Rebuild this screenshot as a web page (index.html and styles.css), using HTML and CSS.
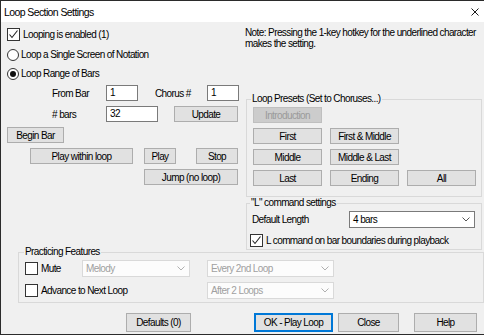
FILE: index.html
```html
<!DOCTYPE html>
<html lang="en">
<head>
  <meta charset="UTF-8">
  <title>Loop Section Settings</title>
  <link rel="stylesheet" href="styles.css">
</head>
<body>
  <div class="dialog">
    <div class="titlebar">
      <span class="title">Loop Section Settings</span>
      <svg class="close" width="8" height="8" viewBox="0 0 8 8"><path d="M0.5 0.5L7.5 7.5M7.5 0.5L0.5 7.5" stroke="#1a1a1a" stroke-width="1"/></svg>
    </div>

    <div class="content">
      <div class="top">
        <div class="left">
          <div class="check-row">
            <span class="box"><svg width="11" height="11" viewBox="0 0 11 11"><path d="M1.5 5.5L4 8.5L9.5 1.5" fill="none" stroke="#222" stroke-width="1.1"/></svg></span>
            Looping is enabled (1)
          </div>
          <div class="radio-row first-radio"><span class="radio"></span>Loop a Single Screen of Notation</div>
          <div class="radio-row"><span class="radio on"></span>Loop Range of Bars</div>

          <div class="bar-row">
            <span class="lbl">From Bar</span>
            <span class="field w-sm">1</span>
            <span class="lbl lbl-chorus">Chorus #</span>
            <span class="field w-sm">1</span>
          </div>
          <div class="bar-row">
            <span class="lbl"># bars</span>
            <span class="field w-md">32</span>
            <button class="btn btn-update">Update</button>
          </div>

          <button class="btn btn-begin">Begin Bar</button>

          <div class="play-row">
            <button class="btn btn-within">Play within loop</button>
            <button class="btn btn-play">Play</button>
            <button class="btn btn-stop">Stop</button>
          </div>
          <div class="play-row jump-row">
            <button class="btn btn-jump">Jump (no loop)</button>
          </div>
        </div>

        <div class="right">
          <p class="note">Note: Pressing the 1-key hotkey for the underlined character<br>makes the setting.</p>

          <fieldset class="group presets">
            <legend>Loop Presets (Set to Choruses...)</legend>
            <div class="preset-grid">
              <button class="btn" disabled>Introduction</button>
              <button class="btn new-row">First</button>
              <button class="btn">First &amp; Middle</button>
              <button class="btn new-row">Middle</button>
              <button class="btn">Middle &amp; Last</button>
              <button class="btn new-row">Last</button>
              <button class="btn">Ending</button>
              <button class="btn">All</button>
            </div>
          </fieldset>

          <fieldset class="group lcmd">
            <legend>"L" command settings</legend>
            <div class="len-row">
              <span class="len-lbl">Default Length</span>
              <div class="combo len-combo">
                <span>4 bars</span>
                <svg width="8" height="5" viewBox="0 0 8 5"><path d="M0.5 0.5L4 4L7.5 0.5" fill="none" stroke="#555" stroke-width="1"/></svg>
              </div>
            </div>
            <div class="check-row lcheck">
              <span class="box"><svg width="11" height="11" viewBox="0 0 11 11"><path d="M1.5 5.5L4 8.5L9.5 1.5" fill="none" stroke="#222" stroke-width="1.1"/></svg></span>
              L command on bar boundaries during playback
            </div>
          </fieldset>
        </div>
      </div>

      <fieldset class="group practice">
        <legend>Practicing Features</legend>
        <div class="practice-grid">
          <div class="check-row"><span class="box"></span>Mute</div>
          <div class="combo off combo-melody">
            <span>Melody</span>
            <svg width="8" height="5" viewBox="0 0 8 5"><path d="M0.5 0.5L4 4L7.5 0.5" fill="none" stroke="#b0b0b0" stroke-width="1"/></svg>
          </div>
          <div class="combo off">
            <span>Every 2nd Loop</span>
            <svg width="8" height="5" viewBox="0 0 8 5"><path d="M0.5 0.5L4 4L7.5 0.5" fill="none" stroke="#b0b0b0" stroke-width="1"/></svg>
          </div>
          <div class="check-row span-two"><span class="box"></span>Advance to Next Loop</div>
          <div class="combo off">
            <span>After 2 Loops</span>
            <svg width="8" height="5" viewBox="0 0 8 5"><path d="M0.5 0.5L4 4L7.5 0.5" fill="none" stroke="#b0b0b0" stroke-width="1"/></svg>
          </div>
        </div>
      </fieldset>

      <div class="footer">
        <button class="btn btn-defaults">Defaults (0)</button>
        <button class="btn btn-ok">OK - Play Loop</button>
        <button class="btn btn-close">Close</button>
        <button class="btn btn-help">Help</button>
      </div>
    </div>
  </div>
</body>
</html>
```

FILE: styles.css
```css
* {
  box-sizing: border-box;
}

body {
  margin: 0;
  background: #fff;
  font-family: 'Liberation Sans', Arial, sans-serif;
  font-size: 10px;
  letter-spacing: -0.6px;
  color: #000;
}

.dialog {
  width: 484px;
  height: 335px;
  border: 1px solid #2b2b2b;
  border-right: none;
  background: #f0f0f0;
  display: flex;
  flex-direction: column;
}

.titlebar {
  height: 21px;
  flex-shrink: 0;
  background: #fff;
  display: flex;
  align-items: center;
  justify-content: space-between;
  padding: 0 5px 0 3px;
}

.title {
  font-size: 10.5px;
}

.content {
  flex: 1;
  display: flex;
  flex-direction: column;
}

.top {
  display: flex;
  height: 229px;
}

/* left column */
.left {
  width: 244px;
  padding: 6px 0 0 6px;
}

.check-row, .radio-row {
  display: flex;
  align-items: center;
  height: 13px;
  white-space: nowrap;
}

.box {
  width: 13px;
  height: 13px;
  flex-shrink: 0;
  border: 1px solid #333;
  background: #fff;
  margin-right: 3px;
  display: flex;
  align-items: center;
  justify-content: center;
}

.radio {
  width: 12px;
  height: 12px;
  flex-shrink: 0;
  border: 1px solid #333;
  border-radius: 50%;
  background: #fff;
  margin-right: 2px;
  display: flex;
  align-items: center;
  justify-content: center;
}

.radio.on::after {
  content: '';
  width: 6px;
  height: 6px;
  border-radius: 50%;
  background: #111;
}

.first-radio {
  margin-top: 7px;
}

.radio-row + .radio-row {
  margin-top: 6px;
}

.bar-row {
  display: flex;
  align-items: center;
  height: 16px;
  margin-top: 5px;
  padding-left: 45px;
}

.lbl {
  width: 54px;
}

.lbl-chorus {
  width: 69px;
  padding-left: 17px;
}

.field {
  height: 16px;
  border: 1px solid #7a7a7a;
  background: #fff;
  padding: 0 3px;
  line-height: 14px;
}

.w-sm {
  width: 32px;
}

.w-md {
  width: 52px;
}

.btn {
  height: 16px;
  padding: 0;
  border: 1px solid #adadad;
  background: #e1e1e1;
  font-family: inherit;
  font-size: 10px;
  letter-spacing: -0.6px;
  color: #000;
  white-space: nowrap;
}

.btn:disabled {
  background: #cccccc;
  border-color: #bfbfbf;
  color: #9a9a9a;
}

.btn-update {
  width: 64px;
  margin-left: 16px;
}

.btn-begin {
  display: block;
  width: 57px;
  margin-top: 5px;
}

.play-row {
  display: flex;
  margin-top: 5px;
  padding-left: 23px;
}

.btn-within {
  width: 103px;
}

.btn-play {
  width: 32px;
  margin-left: 11px;
}

.btn-stop {
  width: 42px;
  margin-left: 20px;
}

.jump-row {
  padding-left: 137px;
}

.btn-jump {
  width: 94px;
}

/* right column */
.right {
  flex: 1;
}

.note {
  height: 71px;
  margin: 0;
  padding-top: 5px;
  line-height: 11px;
  white-space: nowrap;
}

.group {
  margin: 0 2px 0 1px;
  min-width: 0;
  border: 1px solid #d9d9d9;
}

.group legend {
  padding: 0 1px;
  margin-left: -2px;
  line-height: 12px;
}

.presets {
  padding: 2px 0 10px 6px;
}

.preset-grid {
  display: grid;
  grid-template-columns: 69px 69px 69px;
  grid-auto-rows: 16px;
  column-gap: 8px;
  row-gap: 5px;
}

.new-row {
  grid-column: 1;
}

.lcmd {
  padding: 2px 0 2px 5px;
}

.len-row {
  display: flex;
  align-items: center;
  height: 17px;
}

.len-lbl {
  width: 97px;
}

.combo {
  height: 17px;
  display: flex;
  align-items: center;
  justify-content: space-between;
  border: 1px solid #7a7a7a;
  background: #fff;
  padding: 0 4px 0 3px;
}

.combo.off {
  border-color: #d9d9d9;
  background: #fcfcfc;
  color: #a0a0a0;
}

.len-combo {
  width: 126px;
}

.lcheck {
  margin-top: 6px;
  margin-left: -2px;
}

.practice {
  margin: -4px 0 0 17px;
  padding: 3px 0 3px 6px;
}

.practice legend {
  line-height: 10px;
  margin-left: -1px;
}

.practice-grid {
  display: grid;
  grid-template-columns: 57px 125px 127px;
  grid-auto-rows: 17px;
  row-gap: 5px;
  align-items: center;
}

.combo-melody {
  width: 108px;
}

.span-two {
  grid-column: span 2;
}

/* bottom buttons */
.footer {
  display: flex;
  margin-top: 10px;
  padding-left: 125px;
}

.footer .btn {
  height: 19px;
}

.btn-defaults {
  width: 65px;
}

.btn-ok {
  width: 79px;
  margin-left: 63px;
  border: 2px solid #0078d7;
}

.btn-close {
  width: 61px;
  margin-left: 5px;
}

.btn-help {
  width: 63px;
  margin-left: 15px;
}
```
